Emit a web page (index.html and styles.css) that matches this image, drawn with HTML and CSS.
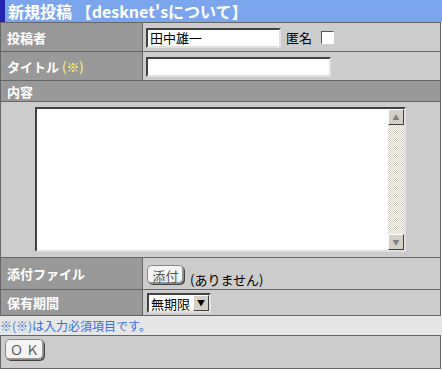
FILE: index.html
```html
<!DOCTYPE html>
<html lang="ja">
<head>
    <meta charset="UTF-8">
    <title>新規投稿</title>
    <link rel="stylesheet" href="styles.css">
</head>
<body>
    <div class="title-bar">新規投稿 【desknet'sについて】</div>
    <table class="form-table">
        <tr class="row-name">
            <th>投稿者</th>
            <td>
                <input type="text" class="name-input" value="田中雄一">
                <span class="anon">匿名</span>
                <input type="checkbox" class="anon-check">
            </td>
        </tr>
        <tr class="row-title">
            <th>タイトル <span class="req">(※)</span></th>
            <td><input type="text" class="title-input"></td>
        </tr>
        <tr class="row-head">
            <th colspan="2">内容</th>
        </tr>
        <tr class="row-body">
            <td colspan="2">
                <div class="text-wrap">
                    <textarea class="body-input"></textarea>
                    <div class="scrollbar">
                        <div class="sb-btn">&#9650;</div>
                        <div class="sb-track"></div>
                        <div class="sb-btn">&#9660;</div>
                    </div>
                </div>
            </td>
        </tr>
        <tr class="row-file">
            <th>添付ファイル</th>
            <td><button class="btn attach">添付</button><span class="none">(ありません)</span></td>
        </tr>
        <tr class="row-keep">
            <th>保有期間</th>
            <td>
                <div class="select">
                    <span class="select-text">無期限</span>
                    <span class="select-arrow">&#9660;</span>
                </div>
            </td>
        </tr>
    </table>
    <div class="note">※(※)は入力必須項目です。</div>
    <div class="actions"><button class="btn ok">ＯＫ</button></div>
</body>
</html>
```

FILE: styles.css
```css
body {
    margin: 0;
    width: 442px;
    background: #ffffff;
    font-family: "MS UI Gothic", "Noto Sans CJK JP", sans-serif;
    font-size: 13px;
    color: #000;
}

.title-bar {
    height: 22px;
    line-height: 22px;
    padding-left: 3px;
    background: #7ba6ee;
    border-left: 5px solid #2424b0;
    color: #fff;
    font-size: 16px;
    font-weight: bold;
    box-sizing: border-box;
}

.form-table {
    width: 441px;
    border-collapse: collapse;
    border: 1px solid #666;
}

.form-table th,
.form-table td {
    border: 1px solid #666;
    padding: 0;
}

.form-table th {
    width: 135px;
    padding-left: 6px;
    background: #999;
    color: #fff;
    font-size: 13px;
    font-weight: bold;
    text-align: left;
}

.form-table td {
    background: #ccc;
    padding-left: 3px;
}

.row-name th, .row-name td { height: 28px; }
.row-title th, .row-title td { height: 28px; }
.row-head th { height: 20px; }
.row-file th, .row-file td { height: 31px; }
.row-keep th, .row-keep td { height: 25px; }

.req {
    color: #ffff66;
    font-weight: normal;
}

input[type="text"] {
    height: 20px;
    box-sizing: border-box;
    border: 2px solid;
    border-color: #404040 #e0e0e0 #e0e0e0 #404040;
    padding: 1px 2px;
    font-family: inherit;
    font-size: 13px;
    background: #fff;
    vertical-align: middle;
}

.name-input { width: 135px; }
.title-input { width: 185px; }

.anon {
    margin-left: 2px;
    vertical-align: middle;
}

.anon-check {
    appearance: none;
    width: 13px;
    height: 13px;
    margin: 0 0 0 6px;
    background: #fff;
    border: 1px solid #fff;
    border-color: #555 #fff #fff #555;
    vertical-align: middle;
}

.row-body td {
    padding: 5px 0;
}

.text-wrap {
    display: flex;
    width: 371px;
    height: 145px;
    margin: 0 auto;
    box-sizing: border-box;
    border: 2px solid;
    border-color: #404040 #e0e0e0 #e0e0e0 #404040;
    background: #fff;
}

.body-input {
    flex: 1;
    border: none;
    resize: none;
    outline: none;
    margin: 0;
}

.scrollbar {
    width: 16px;
    display: flex;
    flex-direction: column;
}

.sb-btn {
    height: 16px;
    box-sizing: border-box;
    background: #d4d0c8;
    border: 1px solid;
    border-color: #fff #404040 #404040 #fff;
    color: #808080;
    font-size: 7px;
    line-height: 14px;
    text-align: center;
}

.sb-track {
    flex: 1;
    background-color: #fff;
    background-image: repeating-conic-gradient(#d4d0c8 0 25%, #fff 0 50%);
    background-size: 2px 2px;
}

.btn {
    font-family: inherit;
    font-size: 13px;
    background: #f4f4f4;
    color: #555;
    border: 1px solid #888;
    border-radius: 5px;
    box-shadow: inset -1px -1px 0 #999, 1px 1px 0 #444;
    padding: 0;
}

.attach {
    width: 37px;
    height: 19px;
    margin-left: 1px;
    vertical-align: top;
    margin-top: 1px;
}

.none {
    margin-left: 6px;
    position: relative;
    top: 6px;
}

.select {
    display: inline-flex;
    align-items: center;
    height: 20px;
    box-sizing: border-box;
    border: 2px solid;
    border-color: #404040 #e0e0e0 #e0e0e0 #404040;
    background: #fff;
    margin-left: 1px;
    vertical-align: middle;
}

.select-text {
    padding: 0 3px 0 2px;
}

.select-arrow {
    width: 16px;
    height: 16px;
    box-sizing: border-box;
    background: #d4d0c8;
    border: 1px solid;
    border-color: #fff #404040 #404040 #fff;
    font-size: 8px;
    line-height: 14px;
    text-align: center;
}

.note {
    height: 19px;
    line-height: 19px;
    background: #e6e6e6;
    color: #3a6fd8;
    font-size: 12px;
}

.actions {
    width: 441px;
    height: 34px;
    box-sizing: border-box;
    border: 1px solid #666;
    background: #ccc;
    padding: 3px 0 0 4px;
}

.ok {
    width: 39px;
    height: 21px;
    letter-spacing: 3px;
    padding-left: 3px;
}
```
